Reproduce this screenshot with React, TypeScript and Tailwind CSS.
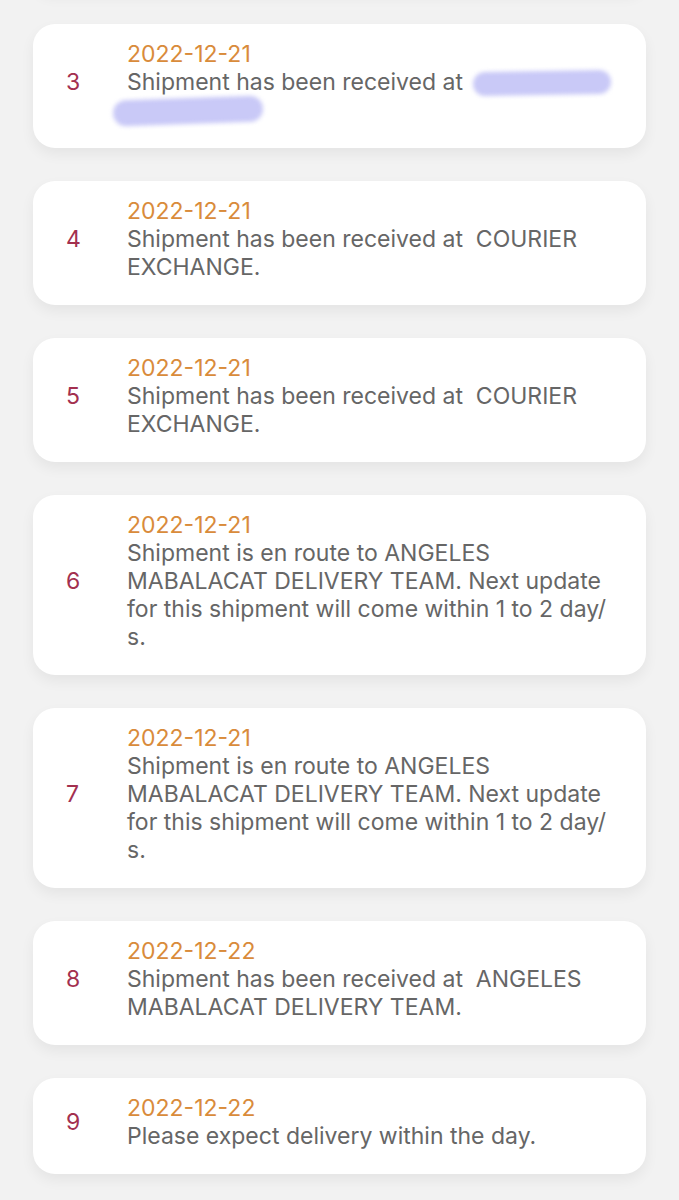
import React from 'react';

type Step = {
  no: number;
  date: string;
  text: React.ReactNode;
};

// redacted location blob from the original screenshot
const Scribble = ({ w, className = '' }: { w: number; className?: string }) => (
  <span
    className={`inline-block align-middle rounded-full bg-[#c9c9f7] blur-[2px] ${className}`}
    style={{ width: w }}
  />
);

const steps: Step[] = [
  {
    no: 3,
    date: '2022-12-21',
    text: (
      <>
        Shipment has been received at{' '}
        <Scribble w={138} className="h-[24px] -my-[4px] ml-[4px] -rotate-1" />
        <br />
        <Scribble w={150} className="h-[26px] -my-[4px] -ml-[14px] -rotate-2" />
      </>
    ),
  },
  { no: 4, date: '2022-12-21', text: 'Shipment has been received at  COURIER EXCHANGE.' },
  { no: 5, date: '2022-12-21', text: 'Shipment has been received at  COURIER EXCHANGE.' },
  {
    no: 6,
    date: '2022-12-21',
    text: 'Shipment is en route to ANGELES MABALACAT DELIVERY TEAM. Next update for this shipment will come within 1 to 2 day/\u200Bs.',
  },
  {
    no: 7,
    date: '2022-12-21',
    text: 'Shipment is en route to ANGELES MABALACAT DELIVERY TEAM. Next update for this shipment will come within 1 to 2 day/\u200Bs.',
  },
  { no: 8, date: '2022-12-22', text: 'Shipment has been received at  ANGELES MABALACAT DELIVERY TEAM.' },
  { no: 9, date: '2022-12-22', text: 'Please expect delivery within the day.' },
];

const cardShadow = 'shadow-[0_6px_14px_rgba(0,0,0,0.06)]';

const StepCard: React.FC<{ step: Step }> = ({ step }) => (
  <div className={`flex items-center bg-white rounded-[22px] pt-[15.5px] pb-[24.5px] pl-[33px] pr-[30px] ${cardShadow}`}>
    <div className="w-[61px] flex-none text-[23px] leading-[28px] text-[#a3304f]">{step.no}</div>
    <div className="flex-1 min-w-0 text-[23px] leading-[28px]">
      <div className="text-[#d98b3b]">{step.date}</div>
      <div className="text-[#666666] whitespace-pre-wrap">{step.text}</div>
    </div>
  </div>
);

export default function App() {
  return (
    <div className="min-h-screen bg-[#f2f2f2] overflow-hidden font-['Inter',sans-serif]">
      <div className="px-[33px] flex flex-col gap-[33px] -mt-[29px] pb-10">
        {/* bottom of the previous card, scrolled off */}
        <div className={`h-[20px] bg-white rounded-b-[22px] ${cardShadow}`} />
        {steps.map((s) => (
          <StepCard key={s.no} step={s} />
        ))}
      </div>
    </div>
  );
}
